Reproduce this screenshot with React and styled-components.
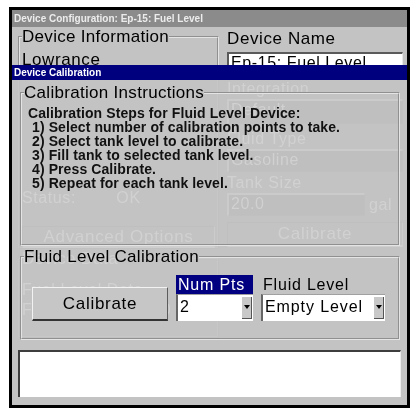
import React from "react";
import styled, { createGlobalStyle } from "styled-components";

const Global = createGlobalStyle`
  html, body { margin: 0; background: #fff; }
  body { font-family: "Liberation Sans", Arial, sans-serif; }
`;

const Frame = styled.div`
  position: relative;
  box-sizing: border-box;
  width: 401px;
  height: 401px;
  margin: 7px 0 0 9px;
  border: 3px solid #000;
  background: #c3c3c3;
  display: flex;
  flex-direction: column;
  overflow: hidden;
`;

const TitleBar = styled.div`
  height: ${(p) => (p.$active ? 15 : 17)}px;
  padding-left: 2px;
  background: ${(p) => (p.$active ? "#00007f" : "#8b8b8b")};
  color: ${(p) => (p.$active ? "#fff" : "#ececec")};
  font: bold 10px/${(p) => (p.$active ? 15 : 17)}px "Liberation Sans", sans-serif;
  white-space: nowrap;
`;

const Main = styled.div`
  flex: 1;
  display: grid;
  grid-template-columns: 201px 176px;
  column-gap: 8px;
  padding: 1px 4px 0 6px;
`;

const Column = styled.div`
  display: flex;
  flex-direction: column;
`;

const Group = styled.fieldset`
  margin: ${(p) => p.$mt || 0}px 0 0;
  padding: 0 2px ${(p) => p.$pb || 0}px;
  border: 2px groove #e4e4e4;
  min-width: 0;
  box-sizing: border-box;
  height: ${(p) => (p.$h ? p.$h + "px" : "auto")};
`;

const Legend = styled.legend`
  padding: 0;
  font-size: 17px;
  line-height: 18px;
  letter-spacing: 0.3px;
  color: #000;
`;

const Label = styled.div`
  font-size: ${(p) => p.$size || 16}px;
  line-height: 20px;
  letter-spacing: 0.6px;
  margin-top: ${(p) => p.$mt || 0}px;
  color: #000;
  white-space: nowrap;
`;

const Field = styled.div`
  box-sizing: border-box;
  height: ${(p) => p.$h}px;
  margin-top: ${(p) => p.$mt || 0}px;
  width: ${(p) => (p.$w ? p.$w + "px" : "auto")};
  background: #fff;
  border-top: 2px solid #5a5a5a;
  border-left: 2px solid #5a5a5a;
  border-right: 1px solid #e8e8e8;
  border-bottom: 1px solid #e8e8e8;
  font-size: 16px;
  line-height: 18px;
  letter-spacing: 0.6px;
  padding-left: 2px;
  white-space: nowrap;
  overflow: hidden;
`;

const Row = styled.div`
  display: flex;
  align-items: ${(p) => p.$align || "center"};
  gap: ${(p) => p.$gap || 0}px;
  margin-top: ${(p) => p.$mt || 0}px;
`;

const Button = styled.div`
  box-sizing: border-box;
  display: flex;
  align-items: center;
  justify-content: center;
  width: ${(p) => (p.$w ? p.$w + "px" : "auto")};
  height: ${(p) => p.$h}px;
  margin-top: ${(p) => p.$mt || 0}px;
  margin-left: ${(p) => p.$ml || 0}px;
  background: #c6c6c6;
  border-top: 1px solid #f2f2f2;
  border-left: 1px solid #f2f2f2;
  border-right: 1px solid #5c5c5c;
  border-bottom: 2px solid #333;
  font-size: 17px;
  letter-spacing: 0.7px;
  color: #000;
`;

const StatusBox = styled.div`
  box-sizing: border-box;
  height: 47px;
  margin: 0 6px 8px;
  background: #fff;
  border-top: 2px solid #3e3e3e;
  border-left: 2px solid #3e3e3e;
  border-right: 1px solid #ededed;
`;

/* the calibration window sits over the configuration window, which shows
   through faintly */
const Dialog = styled.div`
  position: absolute;
  top: 55px;
  left: 0;
  right: 0;
  height: 281px;
  display: flex;
  flex-direction: column;
  background: rgba(206, 206, 206, 0.93);
  backdrop-filter: invert(1);
`;

const DialogBody = styled.div`
  flex: 1;
  padding: 4px 7px 0 8px;
  display: flex;
  flex-direction: column;
`;

const Steps = styled.div`
  margin-top: 4px;
  padding-left: 4px;
  font-size: 14px;
  line-height: 14px;
  font-weight: bold;
  letter-spacing: 0.1px;
  color: #111;
  white-space: pre;
`;

const PickCol = styled.div`
  display: flex;
  flex-direction: column;
  width: ${(p) => p.$w}px;
`;

const PickLabel = styled.div`
  height: 19px;
  box-sizing: border-box;
  padding-left: 2px;
  font-size: 16px;
  line-height: 19px;
  letter-spacing: 0.8px;
  background: ${(p) => (p.$focus ? "#000080" : "transparent")};
  color: ${(p) => (p.$focus ? "#fff" : "#000")};
  white-space: nowrap;
`;

const Select = styled.div`
  box-sizing: border-box;
  height: 27px;
  display: flex;
  background: #fff;
  border-left: 2px solid #666;
  border-top: 1px solid #a0a0a0;
`;

const SelectValue = styled.div`
  flex: 1;
  padding: 3px 0 0 2px;
  font-size: 16px;
  line-height: 18px;
  letter-spacing: 0.9px;
  color: #000;
  white-space: nowrap;
`;

const Arrow = styled.div`
  width: 10px;
  margin: 2px 1px 2px 0;
  background: #c8c8c8;
  border-right: 1px solid #555;
  border-bottom: 1px solid #555;
  display: flex;
  justify-content: center;
  padding-top: 8px;
  box-sizing: border-box;
`;

const ArrowHead = () => (
  <svg width="6" height="4" viewBox="0 0 6 4">
    <path d="M0 0h6L3 4z" fill="#000" />
  </svg>
);

const Picker = ({ label, value, width, focus }) => (
  <PickCol $w={width}>
    <PickLabel $focus={focus}>{label}</PickLabel>
    <Select>
      <SelectValue>{value}</SelectValue>
      <Arrow>
        <ArrowHead />
      </Arrow>
    </Select>
  </PickCol>
);

const steps = [
  "Calibration Steps for Fluid Level Device:",
  " 1) Select number of calibration points to take.",
  " 2) Select tank level to calibrate.",
  " 3) Fill tank to selected tank level.",
  " 4) Press Calibrate.",
  " 5) Repeat for each tank level.",
];

export default function App() {
  return (
    <>
      <Global />
      <Frame>
        <TitleBar>Device Configuration: Ep-15: Fuel Level</TitleBar>
        <Main>
          <Column>
            <Group $h={221}>
              <Legend>Device Information</Legend>
              <Label $size={17} $mt={4}>Lowrance</Label>
              <Label $mt={118}>Status:&nbsp;&nbsp;&nbsp;&nbsp;&nbsp;&nbsp;&nbsp;&nbsp;OK</Label>
              <Button $h={22} $mt={18}>Advanced Options</Button>
            </Group>
            <Group $h={88} $mt={1}>
              <Legend>Device Data</Legend>
              <Label $mt={12}>Fuel Level Data</Label>
              <Label>Fuel Capacity: 20.0 gal</Label>
            </Group>
          </Column>
          <Column>
            <Label $size={17} $mt={1}>Device Name</Label>
            <Field $h={22} $mt={3}>Ep-15: Fuel Level</Field>
            <Label $mt={5}>Integration</Label>
            <Field $h={25}>Default</Field>
            <Label $mt={5}>Fluid Type</Label>
            <Field $h={23}>Gasoline</Field>
            <Label $mt={1}>Tank Size</Label>
            <Row $gap={4}>
              <Field $h={23} $w={138}>20.0</Field>
              <Label>gal</Label>
            </Row>
            <Button $h={25} $mt={6}>Calibrate</Button>
          </Column>
        </Main>
        <StatusBox />

        <Dialog>
          <TitleBar $active>Device Calibration</TitleBar>
          <DialogBody>
            <Group $h={162}>
              <Legend>Calibration Instructions</Legend>
              <Steps>{steps.join("\n")}</Steps>
            </Group>
            <Group $mt={2} $h={92}>
              <Legend>Fluid Level Calibration</Legend>
              <Row $align="flex-end" $gap={8} $mt={9}>
                <Button $w={136} $h={34} $ml={8}>Calibrate</Button>
                <Picker label="Num Pts" value="2" width={77} focus />
                <Picker label="Fluid Level" value="Empty Level" width={124} />
              </Row>
            </Group>
          </DialogBody>
        </Dialog>
      </Frame>
    </>
  );
}
